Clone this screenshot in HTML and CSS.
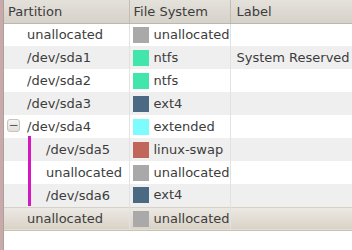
FILE: index.html
```html
<!DOCTYPE html>
<html lang="en">
<head>
  <meta charset="UTF-8" />
  <title>Partitions</title>
  <link rel="stylesheet" href="styles.css">
</head>
<body>
  <div class="panel">
    <table class="parts">
      <colgroup>
        <col class="c-part">
        <col class="c-fs">
        <col class="c-label">
      </colgroup>
      <thead>
        <tr>
          <th>Partition</th>
          <th>File System</th>
          <th>Label</th>
        </tr>
      </thead>
      <tbody>
        <tr>
          <td><span class="name">unallocated</span></td>
          <td><span class="sw unalloc"></span>unallocated</td>
          <td></td>
        </tr>
        <tr class="alt">
          <td><span class="name">/dev/sda1</span></td>
          <td><span class="sw ntfs"></span>ntfs</td>
          <td>System Reserved</td>
        </tr>
        <tr>
          <td><span class="name">/dev/sda2</span></td>
          <td><span class="sw ntfs"></span>ntfs</td>
          <td></td>
        </tr>
        <tr class="alt">
          <td><span class="name">/dev/sda3</span></td>
          <td><span class="sw ext4"></span>ext4</td>
          <td></td>
        </tr>
        <tr>
          <td class="has-exp"><span class="exp">−</span><span class="name">/dev/sda4</span></td>
          <td><span class="sw extended"></span>extended</td>
          <td></td>
        </tr>
        <tr class="alt">
          <td class="child first"><span class="name">/dev/sda5</span></td>
          <td><span class="sw swap"></span>linux-swap</td>
          <td></td>
        </tr>
        <tr>
          <td class="child"><span class="name">unallocated</span></td>
          <td><span class="sw unalloc"></span>unallocated</td>
          <td></td>
        </tr>
        <tr class="alt">
          <td class="child last"><span class="name">/dev/sda6</span></td>
          <td><span class="sw ext4"></span>ext4</td>
          <td></td>
        </tr>
        <tr class="selected">
          <td><span class="name">unallocated</span></td>
          <td><span class="sw unalloc"></span>unallocated</td>
          <td></td>
        </tr>
      </tbody>
    </table>
  </div>
</body>
</html>
```

FILE: styles.css
```css
body {
  margin: 0;
  background-color: #c9a9a9;
  font-family: "DejaVu Sans", sans-serif;
  font-size: 13px;
  color: #3c3c3c;
  height: 250px;
  overflow: hidden;
}

.panel {
  margin-left: 3px;
  height: 250px;
  background-color: #ffffff;
  border-left: 1px solid #a7a39b;
}

.parts {
  width: 100%;
  border-collapse: collapse;
  table-layout: fixed;
}

.c-part {
  width: 125px;
}

.c-fs {
  width: 101px;
}

.parts th {
  height: 23px;
  padding: 0 0 0 4px;
  text-align: left;
  font-weight: normal;
  font-size: 13px;
  color: #3c3c3c;
  background: linear-gradient(#e4e1db, #d6d1c9);
  border-right: 1px solid #c3beb5;
  border-bottom: 1px solid #bcb7ae;
  box-sizing: border-box;
}

.parts th:last-child {
  border-right: none;
  padding-left: 6px;
}

.parts td {
  height: 23px;
  padding: 0;
  white-space: nowrap;
  border-right: 1px solid #e2e2e2;
  box-sizing: border-box;
}

.parts td:last-child {
  border-right: none;
  padding-left: 6px;
}

.parts td:first-child {
  padding-left: 23px;
  position: relative;
}

.parts tr.alt td {
  background-color: #efefef;
}

.parts td.child {
  padding-left: 42px;
}

.parts td.child::before {
  content: "";
  position: absolute;
  left: 24px;
  top: 0;
  bottom: 0;
  width: 3px;
  background-color: #d31ac0;
}

.parts td.child.first::before {
  top: -2px;
}

.parts td.child.last::before {
  bottom: 1px;
}

.exp {
  position: absolute;
  left: 3px;
  top: 4px;
  width: 13px;
  height: 13px;
  box-sizing: border-box;
  border: 1px solid #c8c4bc;
  border-radius: 3px;
  background: linear-gradient(#f6f5f3, #e2dfda);
  font-size: 12px;
  line-height: 10px;
  text-align: center;
  color: #5a5a5a;
}

.parts td:nth-child(2) {
  padding-left: 3px;
}

.sw {
  display: inline-block;
  width: 16px;
  height: 16px;
  margin-right: 5px;
  vertical-align: -4px;
}

.unalloc {
  background-color: #a9a9a9;
}

.ntfs {
  background-color: #42e5ac;
}

.ext4 {
  background-color: #4b6983;
}

.extended {
  background-color: #7dfcfe;
}

.swap {
  background-color: #c1665a;
}

.parts tr.selected td {
  background: linear-gradient(#ece9e4, #d9d2c6);
  border-top: 1px solid #d6d0c6;
  border-bottom: 1px solid #c9c1b3;
}

.parts tr.selected td:first-child {
  padding-left: 23px;
}
```
